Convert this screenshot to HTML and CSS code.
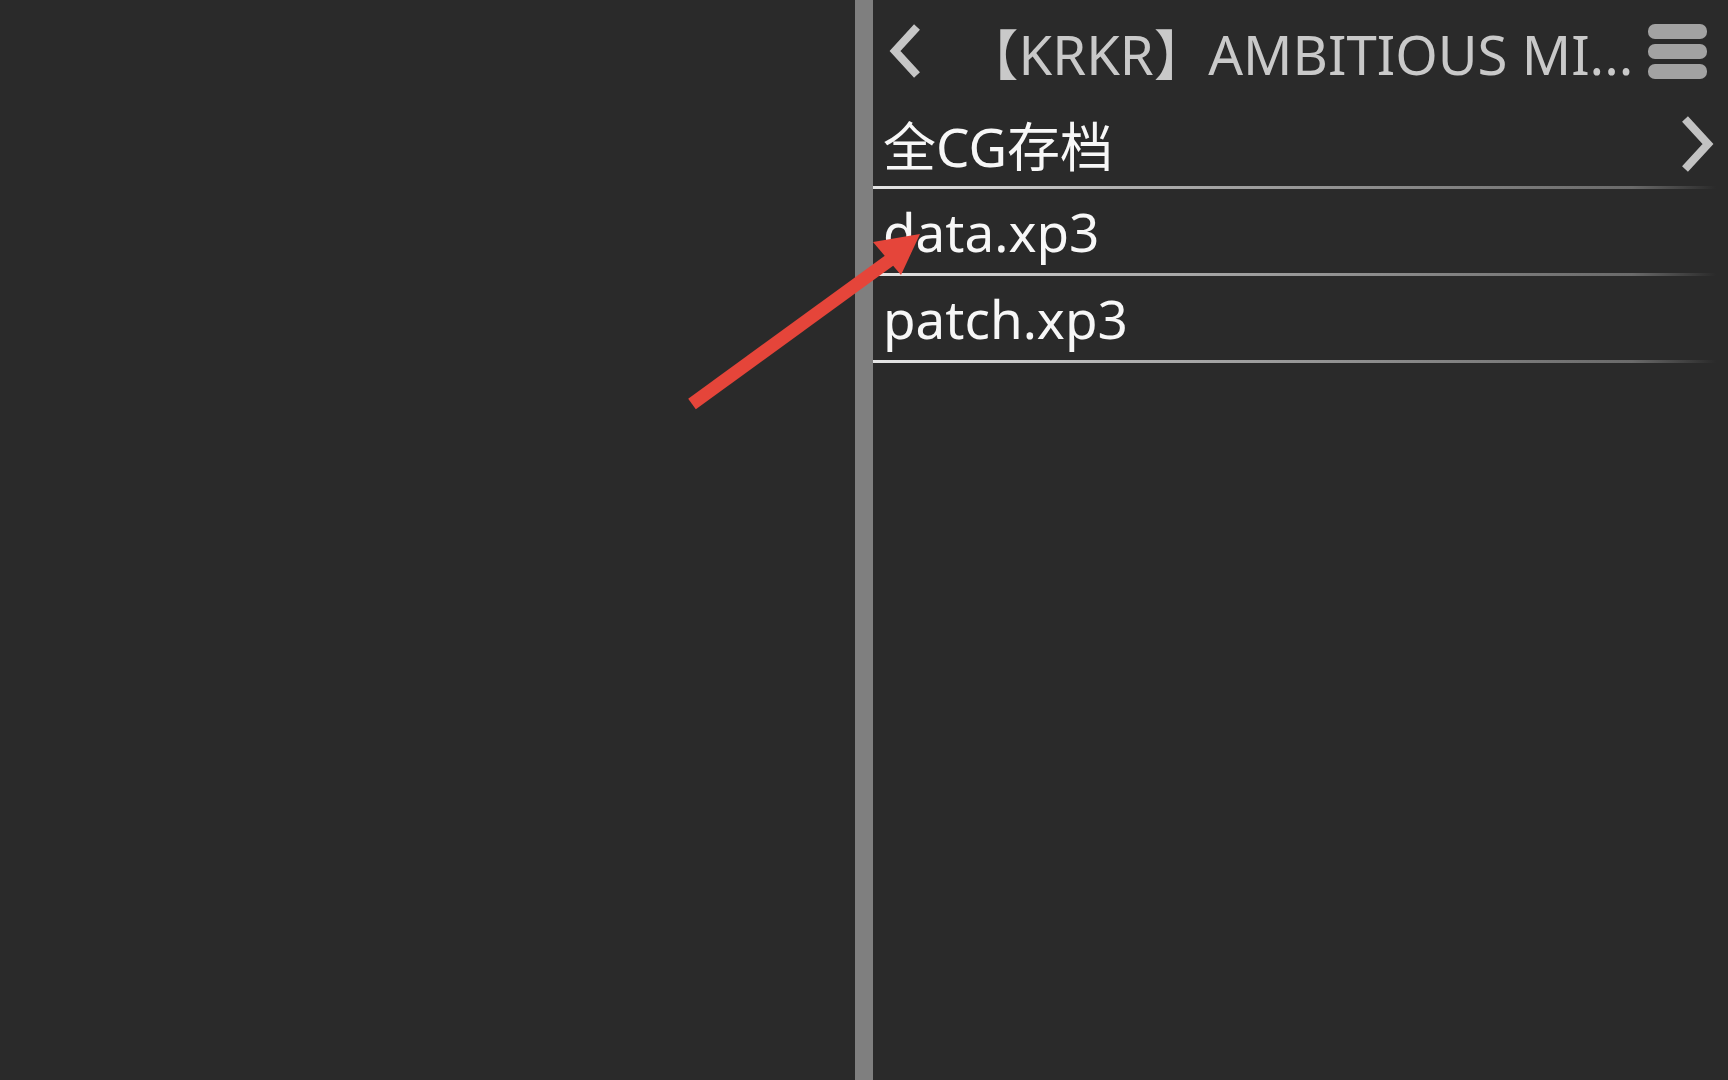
FILE: index.html
```html
<!DOCTYPE html>
<html lang="zh">
<head>
    <meta charset="UTF-8">
    <title>KRKR</title>
    <link rel="stylesheet" href="styles.css">
</head>
<body>

<div class="screen">
    <!-- 左侧空白 -->
    <div class="leftpane"></div>
    <div class="divider"></div>

    <!-- 文件列表 -->
    <div class="rightpane">
        <div class="topbar">
            <svg class="backbtn" width="34" height="54" viewBox="0 0 34 54">
                <path d="M29 3 L7 27 L29 51" fill="none" stroke="#c6c6c6" stroke-width="8"/>
            </svg>
            <div class="title">【KRKR】AMBITIOUS MI...</div>
            <div class="menubtn">
                <span></span>
                <span></span>
                <span></span>
            </div>
        </div>

        <div class="item">
            <div class="itemname">全CG存档</div>
            <svg class="fwdbtn" width="34" height="56" viewBox="0 0 34 56">
                <path d="M4 3 L27 28 L4 53" fill="none" stroke="#c2c2c2" stroke-width="8"/>
            </svg>
        </div>
        <div class="sep"></div>

        <div class="item">
            <div class="itemname">data.xp3</div>
        </div>
        <div class="sep"></div>

        <div class="item">
            <div class="itemname">patch.xp3</div>
        </div>
        <div class="sep"></div>
    </div>
</div>

<!-- 红色箭头标注 -->
<svg class="pointer" width="1728" height="1080" viewBox="0 0 1728 1080">
    <line x1="692" y1="404" x2="890" y2="260" stroke="#e5453a" stroke-width="13"/>
    <polygon points="920,234 873,242 901,275" fill="#e5453a"/>
</svg>

</body>
</html>
```

FILE: styles.css
```css
body {
    margin: 0;
    background-color: #2a2a2a;
    font-family: "Noto Sans", "Open Sans", "Noto Sans CJK SC", sans-serif;
}

.screen {
    display: flex;
    height: 1080px;
    overflow: hidden;
}

.leftpane {
    flex: 0 0 855px;
    background-color: #2a2a2a;
}

.divider {
    flex: 0 0 18px;
    background-color: #7f7f7f;
}

.rightpane {
    flex: 1;
    display: flex;
    flex-direction: column;
}

/* top bar */
.topbar {
    display: flex;
    align-items: center;
    height: 102px;
}

.backbtn {
    margin-left: 15px;
}

.title {
    margin-left: 42px;
    font-size: 54.5px;
    color: #c9c9c9;
    white-space: nowrap;
}

.menubtn {
    margin-left: auto;
    margin-right: 21px;
    display: flex;
    flex-direction: column;
    gap: 5px;
}

.menubtn span {
    display: block;
    width: 59px;
    height: 15px;
    border-radius: 7px;
    background-color: #a2a2a2;
}

/* list */
.item {
    display: flex;
    align-items: center;
    height: 84px;
    padding-left: 10px;
}

.itemname {
    font-size: 53px;
    color: #f7f7f7;
    white-space: nowrap;
}

.fwdbtn {
    margin-left: auto;
    margin-right: 13px;
}

.sep {
    height: 3px;
    margin-right: 12px;
    background: linear-gradient(to right, #e6e6e6 0%, #b0b0b0 30%, #8c8c8c 60%, #6a6a6a 90%, rgba(80,80,80,0) 100%);
}

/* annotation */
.pointer {
    position: absolute;
    left: 0;
    top: 0;
    pointer-events: none;
}
```
